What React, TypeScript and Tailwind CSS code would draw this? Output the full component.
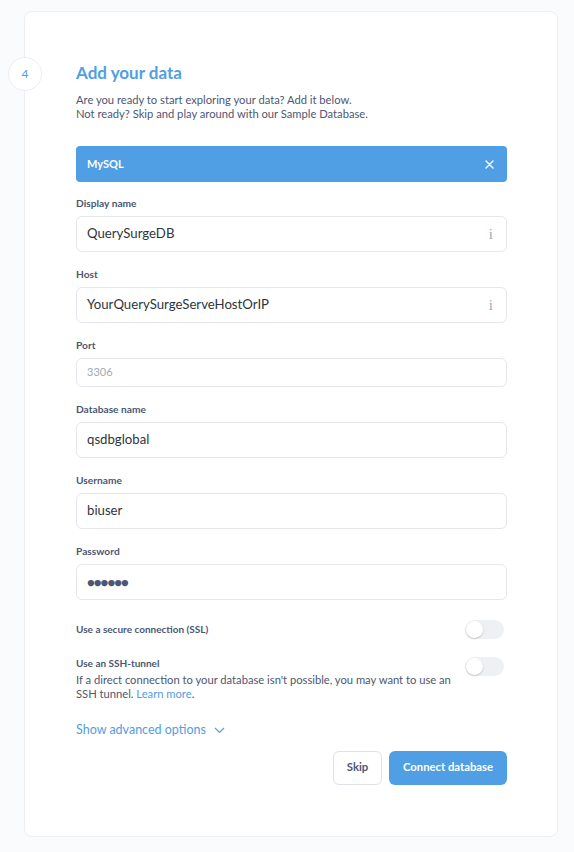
import React from "react";

const font = { fontFamily: "Lato, 'Noto Sans', sans-serif" };

function InfoMark() {
  return (
    <span
      className="text-[15px] leading-none text-[#a4a9b3]"
      style={{ fontFamily: "'Liberation Serif', serif" }}
    >
      i
    </span>
  );
}

function Field({
  label,
  value,
  placeholder,
  info,
  small,
  password,
}: {
  label: string;
  value?: string;
  placeholder?: string;
  info?: boolean;
  small?: boolean;
  password?: boolean;
}) {
  return (
    <div className="mt-[15px] first:mt-0">
      <div className="mb-[6px] text-[10.2px] font-bold leading-[14px] text-[#4c5773]">
        {label}
      </div>
      <div
        className={`flex items-center justify-between rounded-md border border-[#e4e7eb] bg-white pl-[10px] pr-[13px] ${
          small ? "h-[29px]" : "h-9"
        }`}
      >
        {placeholder ? (
          <span className="text-[11px] text-[#a4a9b3]">{placeholder}</span>
        ) : password ? (
          <span className="text-[13px] leading-none tracking-[-1px] text-[#4c5773]">
            ●●●●●●
          </span>
        ) : (
          <span className="text-[13.2px] text-[#2e353b]">{value}</span>
        )}
        {info && <InfoMark />}
      </div>
    </div>
  );
}

function Toggle() {
  return (
    <div className="flex h-[19px] w-[39px] items-center rounded-full bg-[#eef1f4] px-[1px]">
      <div className="h-[17px] w-[17px] rounded-full bg-white shadow-[0_1px_2px_rgba(0,0,0,0.2)]" />
    </div>
  );
}

export default function App() {
  return (
    <div className="min-h-[852px] bg-[#f9fbfc] pt-[11px]" style={font}>
      <div className="relative ml-6 w-[534px] rounded-lg border border-[#eceef1] bg-white pb-[51px] pl-[51px] pr-[50px] pt-[49px]">
        <div className="absolute left-[-17px] top-[45px] flex h-[34px] w-[34px] items-center justify-center rounded-full border border-[#eceef1] bg-white text-[12px] text-[#509ee3]">
          4
        </div>

        <h1 className="text-[17px] font-bold leading-6 text-[#509ee3]">
          Add your data
        </h1>
        <p className="mt-[8px] text-[11.2px] leading-[14px] text-[#4c5773]">
          Are you ready to start exploring your data? Add it below.
          <br />
          Not ready? Skip and play around with our Sample Database.
        </p>

        <div className="mt-[25px] flex h-9 items-center justify-between rounded-[4px] bg-[#509ee3] pl-[11px] pr-[13px]">
          <span className="text-[11px] font-bold text-white">MySQL</span>
          <svg width="9" height="9" viewBox="0 0 9 9">
            <path
              d="M1 1 L8 8 M8 1 L1 8"
              stroke="white"
              strokeWidth="1.4"
              strokeLinecap="round"
            />
          </svg>
        </div>

        <div className="mt-[14px]">
          <Field label="Display name" value="QuerySurgeDB" info />
          <Field label="Host" value="YourQuerySurgeServeHostOrIP" info />
          <Field label="Port" placeholder="3306" small />
          <Field label="Database name" value="qsdbglobal" />
          <Field label="Username" value="biuser" />
          <Field label="Password" password />
        </div>

        <div className="mt-[20px] flex items-center justify-between pr-[3px]">
          <span className="text-[10px] font-bold text-[#4c5773]">
            Use a secure connection (SSL)
          </span>
          <Toggle />
        </div>

        <div className="mt-[17px] flex items-start justify-between pr-[3px]">
          <div className="w-[380px]">
            <div className="text-[10px] font-bold leading-[14px] text-[#4c5773]">
              Use an SSH-tunnel
            </div>
            <p className="mt-[3px] text-[11.2px] leading-[14px] text-[#4c5773]">
              If a direct connection to your database isn't possible, you may
              want to use an SSH tunnel.{" "}
              <span className="text-[#509ee3]">Learn more</span>.
            </p>
          </div>
          <div className="pt-[1px]">
            <Toggle />
          </div>
        </div>

        <div className="mt-[20px] flex items-center gap-[8px] text-[12.5px] text-[#509ee3]">
          <span>Show advanced options</span>
          <svg width="11" height="7" viewBox="0 0 11 7">
            <path
              d="M1 1 L5.5 5.5 L10 1"
              fill="none"
              stroke="#509ee3"
              strokeWidth="1.2"
            />
          </svg>
        </div>

        <div className="mt-[11px] flex justify-end gap-[7px]">
          <button className="h-[34px] w-[49px] rounded-md border border-[#dfe2e6] bg-white text-[11.3px] font-bold text-[#4c5773]">
            Skip
          </button>
          <button className="h-[34px] w-[118px] rounded-md bg-[#509ee3] text-[11.3px] font-bold text-white">
            Connect database
          </button>
        </div>
      </div>
    </div>
  );
}
